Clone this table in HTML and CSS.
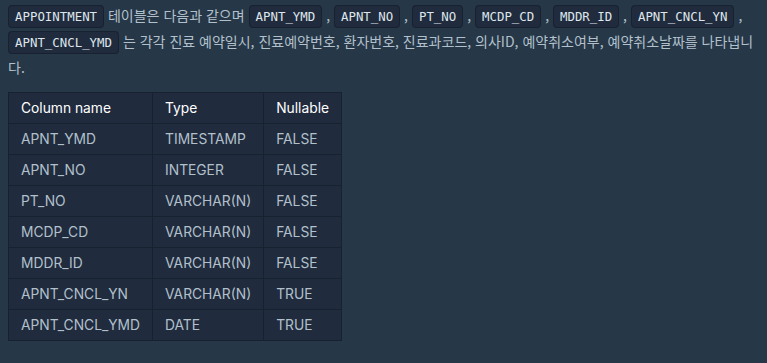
FILE: index.html
```html
<!DOCTYPE html>
<html lang="ko">
<head>
<meta charset="utf-8">
<title>APPOINTMENT</title>
<link rel="stylesheet" href="styles.css">
</head>
<body>
<div class="markdown">
  <p class="desc"><code>APPOINTMENT</code> 테이블은 다음과 같으며 <code>APNT_YMD</code> , <code>APNT_NO</code> , <code>PT_NO</code> , <code>MCDP_CD</code> , <code>MDDR_ID</code> , <code>APNT_CNCL_YN</code> , <code>APNT_CNCL_YMD</code> 는 각각 진료 예약일시, 진료예약번호, 환자번호, 진료과코드, 의사ID, 예약취소여부, 예약취소날짜를 나타냅니다.</p>
  <table class="schema">
    <thead>
      <tr><th>Column name</th><th>Type</th><th>Nullable</th></tr>
    </thead>
    <tbody>
      <tr><td>APNT_YMD</td><td>TIMESTAMP</td><td>FALSE</td></tr>
      <tr><td>APNT_NO</td><td>INTEGER</td><td>FALSE</td></tr>
      <tr><td>PT_NO</td><td>VARCHAR(N)</td><td>FALSE</td></tr>
      <tr><td>MCDP_CD</td><td>VARCHAR(N)</td><td>FALSE</td></tr>
      <tr><td>MDDR_ID</td><td>VARCHAR(N)</td><td>FALSE</td></tr>
      <tr><td>APNT_CNCL_YN</td><td>VARCHAR(N)</td><td>TRUE</td></tr>
      <tr><td>APNT_CNCL_YMD</td><td>DATE</td><td>TRUE</td></tr>
    </tbody>
  </table>
</div>
</body>
</html>
```

FILE: styles.css
```css
html, body {
  margin: 0;
  background: #263747;
}

.markdown {
  padding: 2px 6px 0 8px;
  color: #b2c0cc;
  font-family: "Noto Sans CJK KR", "Noto Sans", sans-serif;
  font-size: 14px;
  line-height: 26px;
}

.desc {
  margin: 0 0 12px;
}

.desc code {
  font-family: "DejaVu Sans Mono", monospace;
  font-size: 12.4px;
  line-height: 1;
  color: #dfe6ec;
  background: #202b3d;
  border: 1px solid #172130;
  border-radius: 4px;
  padding: 3px 6px;
}

.schema {
  border-collapse: collapse;
  background: #202b3d;
  font-family: Inter, "Noto Sans", sans-serif;
  font-size: 13.8px;
  line-height: 20px;
}

.schema th,
.schema td {
  border: 1px solid #172130;
  padding: 5px 12px 5px 12px;
  text-align: left;
  white-space: nowrap;
}

.schema th {
  color: #ffffff;
  font-weight: 400;
}

.schema td {
  color: #b2c0cc;
}
```
